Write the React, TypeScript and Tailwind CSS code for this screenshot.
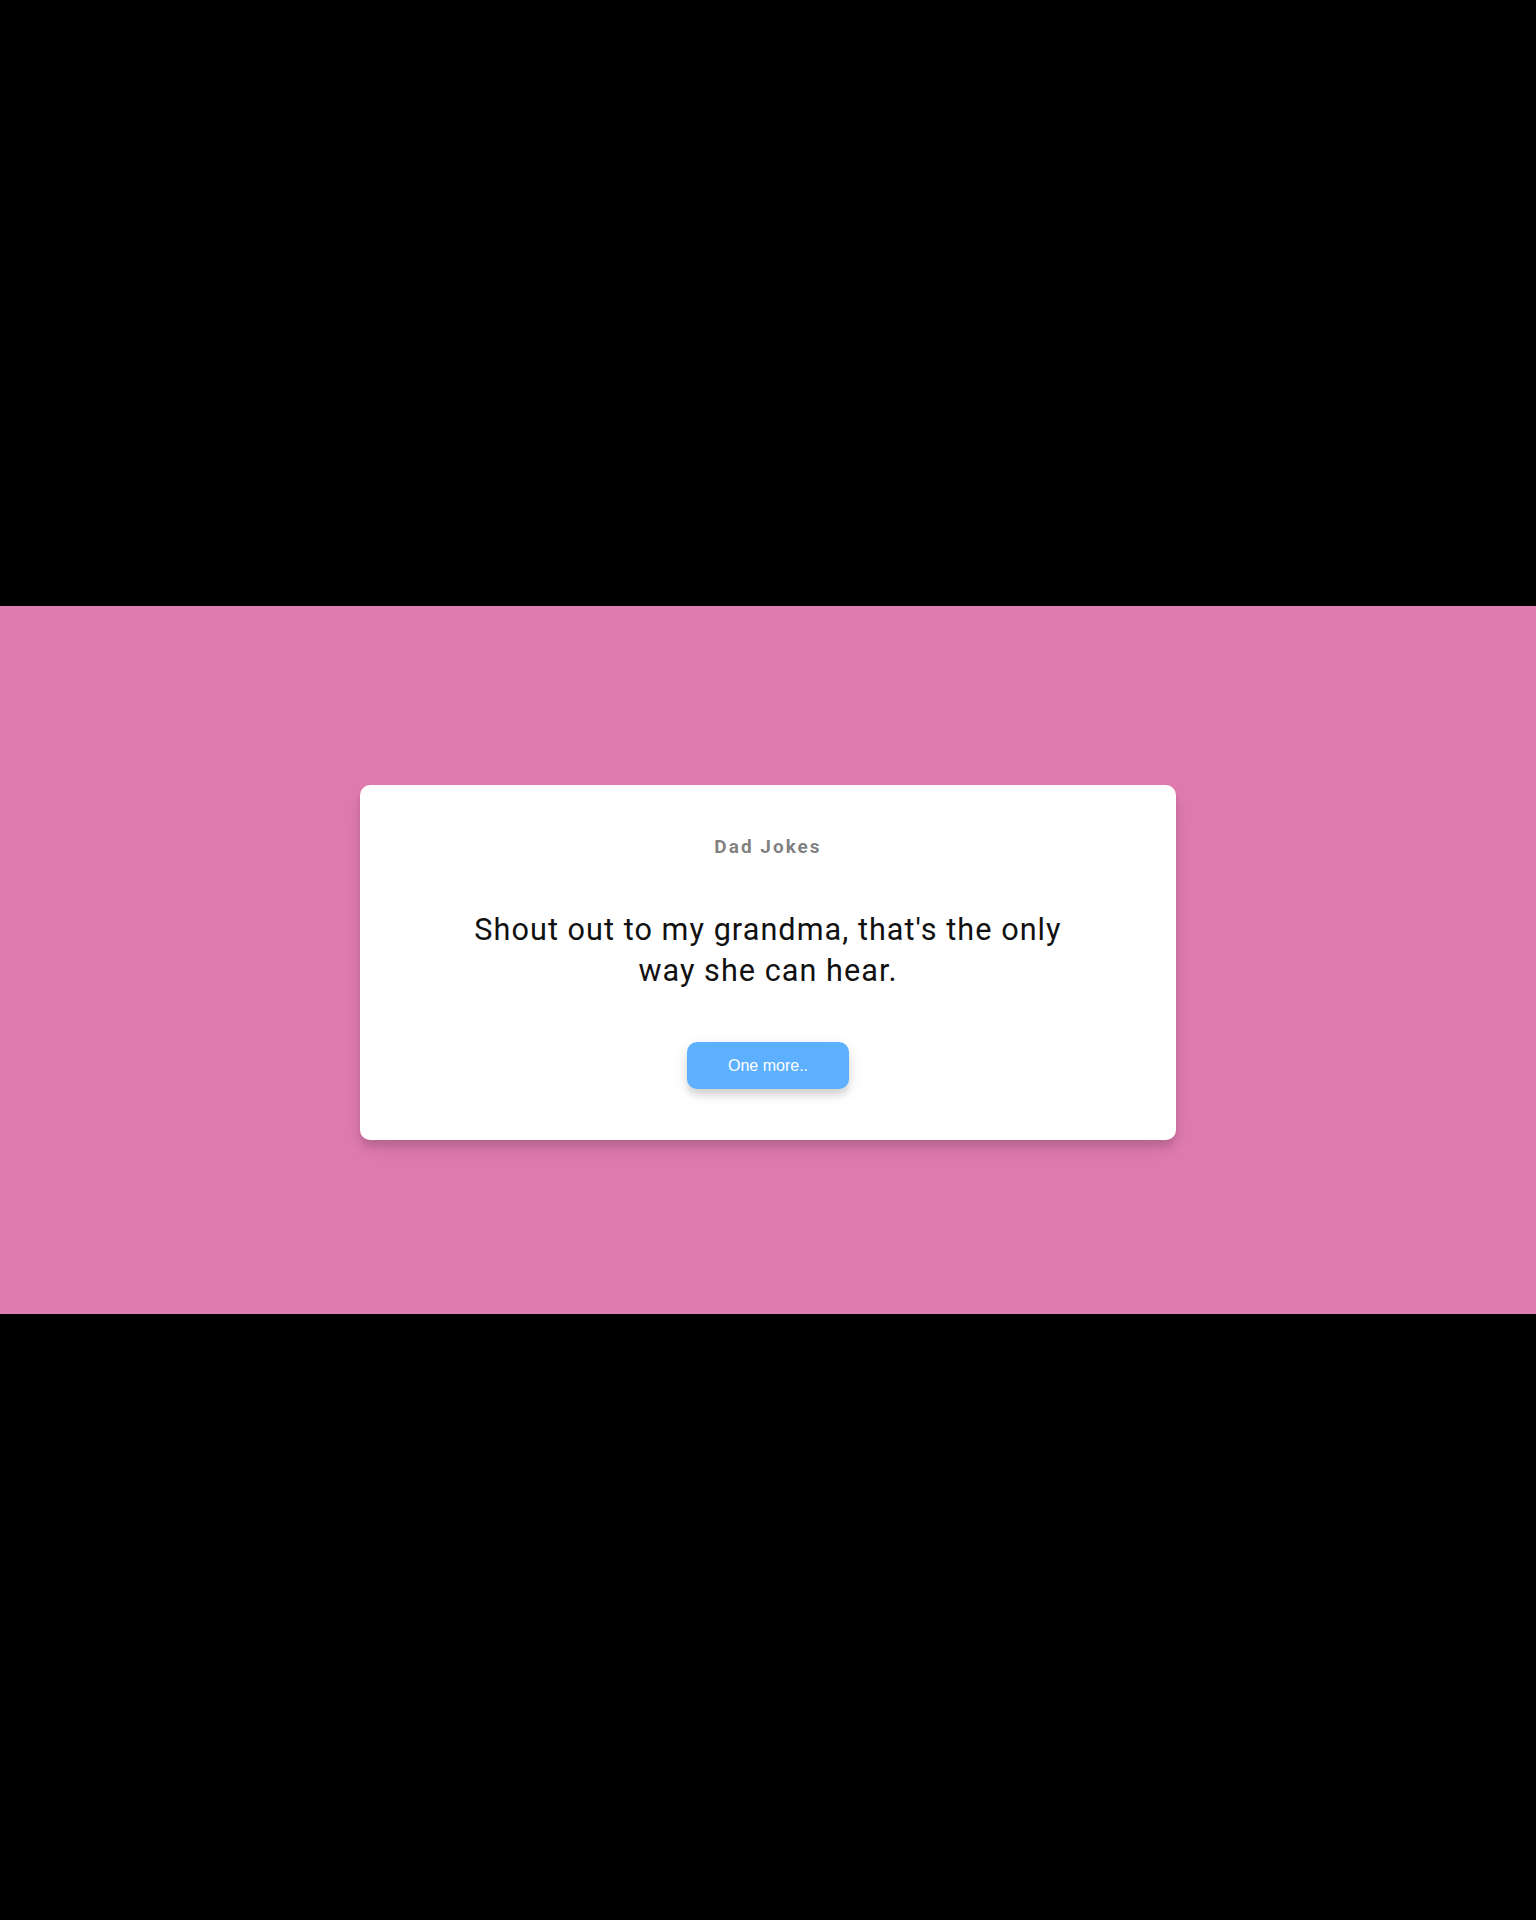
export default function App() {
  return (
    <div className="min-h-[1920px] w-full bg-black flex flex-col">
      <div className="h-[606px]" />
      <div className="h-[708px] bg-[#e07bb0] flex items-center justify-center">
        <JokeCard />
      </div>
    </div>
  )
}

const JokeCard = () => {
  return (
    <div className="mt-[4px] w-[816px] bg-white rounded-[10px] px-5 py-[51px] text-center font-['Roboto',sans-serif] shadow-[0_10px_20px_rgba(0,0,0,0.1),0_6px_6px_rgba(0,0,0,0.1)]">
      <h3 className="text-[19px] leading-[22px] font-bold tracking-[2px] text-black/50">Dad Jokes</h3>
      <div className="max-w-[612px] mx-auto my-[51px] text-[30.6px] leading-[41px] tracking-[1.05px] text-[#111]">
        Shout out to my grandma, that's the only way she can hear.
      </div>
      <button className="bg-[#5cb0ff] text-white rounded-[10px] px-[41px] py-[14px] text-[16px] leading-[19px] font-['Liberation_Sans',Arial,sans-serif] shadow-[0_5px_15px_rgba(0,0,0,0.1),0_6px_6px_rgba(0,0,0,0.1)]">
        One more..
      </button>
    </div>
  )
}
